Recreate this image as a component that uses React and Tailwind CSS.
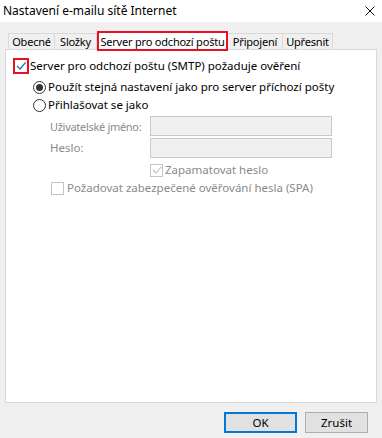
import React from 'react';

const font = { fontFamily: '"Segoe UI", "Noto Sans", "Liberation Sans", sans-serif' };

function Radio({ checked, label }) {
    return (
        <div className="flex h-[16px] items-center">
            <span className="flex h-[13px] w-[13px] items-center justify-center rounded-full border border-[#333333] bg-white">
                {checked && <span className="h-[7px] w-[7px] rounded-full bg-[#333333]" />}
            </span>
            <span className="ml-[2px] text-black">{label}</span>
        </div>
    );
}

function Tab({ label, active, w }) {
    if (active) {
        return (
            <div className={`relative z-10 -mb-[2px] flex h-[20px] items-center justify-center border-2 border-[#e81123] bg-white ${w}`}>
                {label}
            </div>
        );
    }
    return (
        <div className={`flex h-[16px] items-center justify-center border border-b-0 border-[#d9d9d9] bg-[#f0f0f0] ${w}`}>
            {label}
        </div>
    );
}

export default function App() {
    return (
        <div className="flex h-[438px] w-[382px] flex-col whitespace-nowrap bg-[#f0f0f0] text-[11.5px] leading-none text-black" style={font}>
            <div className="flex h-[22px] items-center justify-between bg-white pl-[3px] pr-[7px]">
                <span className="-mt-[1px] text-[12px]">Nastavení e-mailu sítě Internet</span>
                <svg width="10" height="10" viewBox="0 0 10 10">
                    <path d="M0.5 0.5 L9.5 9.5 M9.5 0.5 L0.5 9.5" stroke="#111" strokeWidth="1" />
                </svg>
            </div>

            <div className="mt-[9px] ml-[5px] w-[372px]">
                <div className="flex items-end pl-[3px] text-[11px] tracking-[-0.2px]">
                    <Tab label="Obecné" w="w-[47px]" />
                    <Tab label="Složky" w="w-[42px] border-l-0" />
                    <Tab label="Server pro odchozí poštu" active w="w-[131px]" />
                    <Tab label="Připojení" w="w-[55px] border-l-0" />
                    <Tab label="Upřesnit" w="w-[50px] border-l-0" />
                </div>

                <div className="h-[354px] border border-[#d9d9d9] bg-white pt-[8px]">
                    <div className="flex h-[16px] items-center pl-[7px]">
                        <span className="flex h-[16px] w-[16px] items-center justify-center border-2 border-[#e81123] bg-white">
                            <svg width="10" height="10" viewBox="0 0 10 10">
                                <path d="M1 5 L4 8 L9.5 1.5" fill="none" stroke="#1f6fc5" strokeWidth="1.2" />
                            </svg>
                        </span>
                        <span className="ml-[1px]">Server pro odchozí poštu (SMTP) požaduje ověření</span>
                    </div>

                    <div className="mt-[5px] pl-[27px]">
                        <Radio checked label="Použít stejná nastavení jako pro server příchozí pošty" />
                    </div>
                    <div className="mt-[2px] pl-[27px]">
                        <Radio label="Přihlašovat se jako" />
                    </div>

                    <div className="mt-[3px] flex items-center pl-[44px] text-[#8a8a8a]">
                        <span className="w-[100px] text-[11px] tracking-[-0.3px]">Uživatelské jméno:</span>
                        <div className="h-[20px] w-[182px] border border-[#c3cad3] bg-[#f0f0f0]" />
                    </div>
                    <div className="mt-[2px] flex items-center pl-[44px] text-[#8a8a8a]">
                        <span className="w-[100px]">Heslo:</span>
                        <div className="h-[20px] w-[182px] border border-[#c3cad3] bg-[#f0f0f0]" />
                    </div>

                    <div className="mt-[4px] flex h-[16px] items-center pl-[144px] text-[#8a8a8a]">
                        <span className="flex h-[13px] w-[13px] items-center justify-center border border-[#c4c4c4] bg-white">
                            <svg width="10" height="10" viewBox="0 0 10 10">
                                <path d="M1 5 L4 8 L9.5 1.5" fill="none" stroke="#bcbcbc" strokeWidth="1.1" />
                            </svg>
                        </span>
                        <span className="ml-[2px]">Zapamatovat heslo</span>
                    </div>
                    <div className="mt-[2px] flex h-[16px] items-center pl-[45px] text-[#8a8a8a]">
                        <span className="h-[13px] w-[13px] border border-[#c4c4c4] bg-white" />
                        <span className="ml-[3px]">Požadovat zabezpečené ověřování hesla (SPA)</span>
                    </div>
                </div>
            </div>

            <div className="mt-[9px] flex justify-end gap-[8px] pr-[14px]">
                <button className="flex h-[21px] w-[73px] items-center justify-center border-2 border-[#0078d7] bg-[#e1e1e1]">OK</button>
                <button className="flex h-[21px] w-[63px] items-center justify-center border border-[#adadad] bg-[#e1e1e1]">Zrušit</button>
            </div>
        </div>
    );
}
